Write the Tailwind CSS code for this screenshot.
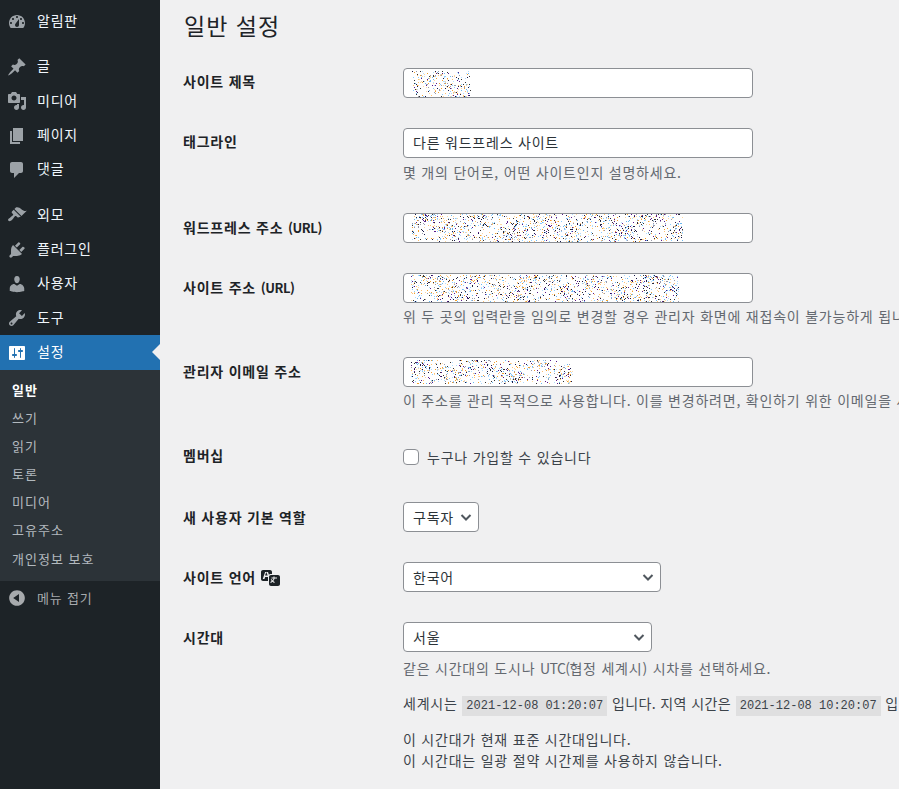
<!DOCTYPE html>
<html lang="ko">
<head>
<meta charset="utf-8">
<title>일반 설정</title>
<script src="https://cdn.jsdelivr.net/npm/@tailwindcss/browser@4"></script>
</head>
<body class="bg-[#f0f0f1] font-['Noto_Sans_CJK_KR','Noto_Sans',sans-serif] text-[14px] tracking-[0.78px] text-[#3c434a] overflow-hidden h-[789px] w-[899px]">
<div class="flex h-[789px] w-[899px] overflow-hidden">
  <aside class="w-40 shrink-0 bg-[#1d2327] pt-[4.4px] text-[14px] text-[#f0f6fc]">
    <a class="flex items-center h-[34.33px] mb-[11px] [&>span]:pb-[2px]"><svg class="w-5 h-5 ml-[7px] mr-[10px] fill-[#9ca2a7]" viewBox="0 0 20 20"><path fill-rule="evenodd" d="M3.76 16h12.48c1.1-1.37 1.76-3.11 1.76-5 0-4.42-3.58-8-8-8s-8 3.58-8 8c0 1.89.66 3.63 1.76 5zM10 4c.55 0 1 .45 1 1s-.45 1-1 1-1-.45-1-1 .45-1 1-1zM6 6c.55 0 1 .45 1 1s-.45 1-1 1-1-.45-1-1 .45-1 1-1zm8 0c.55 0 1 .45 1 1s-.45 1-1 1-1-.45-1-1 .45-1 1-1zm-5.37 5.55L12 7v6c0 1.1-.9 2-2 2s-2-.9-2-2c0-.57.24-1.08.63-1.45zM4 10c.55 0 1 .45 1 1s-.45 1-1 1-1-.45-1-1 .45-1 1-1zm12 0c.55 0 1 .45 1 1s-.45 1-1 1-1-.45-1-1 .45-1 1-1z"/></svg><span>알림판</span></a>
    <a class="flex items-center h-[34.33px] [&>span]:pb-[2px]"><svg class="w-5 h-5 ml-[7px] mr-[10px] fill-[#9ca2a7]" viewBox="0 0 20 20"><path d="M10.44 3.02l1.82-1.82 6.36 6.35-1.83 1.82c-1.05-.68-2.48-.57-3.41.36l-.75.75c-.92.93-1.04 2.35-.35 3.41l-1.83 1.82-2.41-2.41-2.8 2.79c-.42.42-3.38 2.71-3.8 2.29s1.86-3.39 2.28-3.81l2.79-2.79L4.1 9.36l1.83-1.82c1.05.69 2.48.57 3.4-.36l.75-.75c.93-.92 1.05-2.35.36-3.41z"/></svg><span>글</span></a>
    <a class="flex items-center h-[34.33px] [&>span]:pb-[2px]"><svg class="w-5 h-5 ml-[7px] mr-[10px] fill-[#9ca2a7]" viewBox="0 0 20 20"><path fill-rule="evenodd" d="M13 11V4c0-.55-.45-1-1-1h-1.67L9 1H5L3.67 3H2c-.55 0-1 .45-1 1v7c0 .55.45 1 1 1h10c.55 0 1-.45 1-1zM7 4.500c1.38 0 2.500 1.120 2.500 2.500S8.380 9.500 7 9.500 4.500 8.380 4.500 7 5.620 4.500 7 4.500zM14 6h5v10.500c0 1.380-1.120 2.500-2.500 2.500S14 17.880 14 16.500s1.120-2.500 2.500-2.500c.17 0 .34.02.5.05V9h-3V6zm-4 8.050V13h2v3.500c0 1.380-1.120 2.500-2.500 2.500S7 17.880 7 16.500 8.120 14 9.500 14c.17 0 .34.02.5.05z"/></svg><span>미디어</span></a>
    <a class="flex items-center h-[34.33px] [&>span]:pb-[2px]"><svg class="w-5 h-5 ml-[7px] mr-[10px] fill-[#9ca2a7]" viewBox="0 0 20 20"><path d="M6 15V2h10v13H6zm-1 1h8v2H3V5h2v11z"/></svg><span>페이지</span></a>
    <a class="flex items-center h-[34.33px] mb-[11px] [&>span]:pb-[2px]"><svg class="w-5 h-5 ml-[7px] mr-[10px] fill-[#9ca2a7]" viewBox="0 0 20 20"><path d="M5 2h9c1.100 0 2 .9 2 2v7c0 1.100-.9 2-2 2h-2l-5 5v-5H5c-1.100 0-2-.9-2-2V4c0-1.100.9-2 2-2z"/></svg><span>댓글</span></a>
    <a class="flex items-center h-[34.33px] [&>span]:pb-[2px]"><svg class="w-5 h-5 ml-[7px] mr-[10px] fill-[#9ca2a7]" viewBox="0 0 20 20"><path d="M14.480 11.060L7.410 3.990l1.500-1.500c.5-.56 2.300-.47 3.510.32 1.210.8 1.430 1.280 2.910 2.100 1.180.64 2.450 1.260 4.450.85zm-.71.71L6.700 4.700 4.930 6.470c-.39.39-.39 1.020 0 1.410l1.060 1.060c.39.39.39 1.030 0 1.420-.6.6-1.430 1.110-2.210 1.690-.35.26-.7.53-1.010.84C1.430 13.230.4 14.770 1.450 15.820c1.050 1.050 2.590.02 3.940-1.330.31-.31.58-.66.84-1.010.58-.78 1.090-1.610 1.690-2.210.39-.39 1.030-.39 1.420 0l1.060 1.060c.39.39 1.020.39 1.410 0z"/></svg><span>외모</span></a>
    <a class="flex items-center h-[34.33px] [&>span]:pb-[2px]"><svg class="w-5 h-5 ml-[7px] mr-[10px] fill-[#9ca2a7]" viewBox="0 0 20 20"><path d="M13.110 4.360L9.870 7.600 8 5.730l3.240-3.240c.35-.34 1.050-.2 1.560.32.52.51.66 1.210.31 1.550zm-8 1.770l.91-1.120 9.010 9.010-1.190.84c-.71.71-2.630 1.160-3.820 1.160H6.140L4.900 17.260c-.59.59-1.540.59-2.120 0-.59-.58-.59-1.530 0-2.120l1.240-1.240v-3.880c0-1.130.4-3.190 1.090-3.890zm7.260 3.970l3.240-3.240c.34-.35 1.040-.21 1.550.31.52.51.66 1.210.31 1.550l-3.240 3.250z"/></svg><span>플러그인</span></a>
    <a class="flex items-center h-[34.33px] [&>span]:pb-[2px]"><svg class="w-5 h-5 ml-[7px] mr-[10px] fill-[#9ca2a7]" viewBox="0 0 20 20"><path d="M10 9.250c-2.270 0-2.730-3.440-2.730-3.440C7 4.020 7.820 2 9.970 2c2.160 0 2.980 2.020 2.710 3.810 0 0-.41 3.440-2.680 3.440zm0 2.570L12.720 10c2.390 0 4.520 2.330 4.520 4.530v2.490s-3.650 1.130-7.240 1.130c-3.650 0-7.240-1.130-7.240-1.130v-2.490c0-2.250 1.940-4.480 4.470-4.480z"/></svg><span>사용자</span></a>
    <a class="flex items-center h-[34.33px] [&>span]:pb-[2px]"><svg class="w-5 h-5 ml-[7px] mr-[10px] fill-[#9ca2a7]" viewBox="0 0 20 20"><path fill-rule="evenodd" d="M16.680 9.770c-1.340 1.340-3.300 1.670-4.950.99l-5.410 6.520c-.99.99-2.590.99-3.580 0s-.99-2.590 0-3.570l6.520-5.420c-.68-1.650-.35-3.610.99-4.950 1.280-1.280 3.120-1.620 4.720-1.060l-2.890 2.890 2.820 2.820 2.860-2.870c.53 1.580.18 3.390-1.080 4.650zM3.810 16.210c.4.39 1.040.39 1.430 0 .4-.4.4-1.040 0-1.430-.39-.4-1.030-.4-1.430 0-.39.39-.39 1.030 0 1.430z"/></svg><span>도구</span></a>
    <a class="relative flex items-center h-[34.33px] bg-[#2271b1] text-white [&>span]:pb-[2px]"><svg class="w-5 h-5 ml-[7px] mr-[10px] fill-white" viewBox="0 0 20 20"><path fill-rule="evenodd" d="M18 16V4c0-.55-.45-1-1-1H3c-.55 0-1 .45-1 1v12c0 .55.45 1 1 1h14c.55 0 1-.45 1-1zM8 11h1c.55 0 1 .45 1 1s-.45 1-1 1H8v1.500c0 .28-.22.5-.5.5s-.5-.22-.5-.5V13H6c-.55 0-1-.45-1-1s.45-1 1-1h1V5.500c0-.28.22-.5.5-.5s.5.22.5.5V11zm5-2h-1c-.55 0-1-.45-1-1s.45-1 1-1h1V5.500c0-.28.22-.5.5-.5s.5.22.5.5V7h1c.55 0 1 .45 1 1s-.45 1-1 1h-1v5.500c0 .28-.22.5-.5.5s-.5-.22-.5-.5V9z"/></svg><span>설정</span><i class="absolute right-0 top-[9px] w-0 h-0 border-y-[8px] border-y-transparent border-r-[8px] border-r-[#f0f0f1]"></i></a>
    <ul class="bg-[#2c3338] pt-[6px] pb-[9px] text-[13px] tracking-[1px] text-[#f0f6fc]/70">
      <li class="flex items-center h-[28.1px] pl-3 font-bold text-white">일반</li>
      <li class="flex items-center h-[28.1px] pl-3">쓰기</li>
      <li class="flex items-center h-[28.1px] pl-3">읽기</li>
      <li class="flex items-center h-[28.1px] pl-3">토론</li>
      <li class="flex items-center h-[28.1px] pl-3">미디어</li>
      <li class="flex items-center h-[28.1px] pl-3">고유주소</li>
      <li class="flex items-center h-[28.1px] pl-3">개인정보 보호</li>
    </ul>
    <a class="flex items-center h-[34px] text-[13px] tracking-[0.8px] text-[#a7aaad] [&>span]:pb-[2px]"><svg class="w-5 h-5 ml-[7px] mr-[10px] fill-[#a7aaad]" viewBox="0 0 20 20"><path fill-rule="evenodd" d="M10 2.160c4.330 0 7.840 3.510 7.840 7.840s-3.510 7.840-7.840 7.840S2.160 14.330 2.160 10 5.710 2.160 10 2.160zm2 11.720V6.120L6.180 9.970z"/></svg><span>메뉴 접기</span></a>
  </aside>

  <main class="flex-1 min-w-0 pl-[23px]">
    <h1 class="h-[53px] pl-[1px] pt-[7px] text-[23px] tracking-[1px] leading-[36px] text-[#1d2327]">일반 설정</h1>

    <section class="flex py-[15px]">
      <label class="w-[220px] shrink-0 pt-[2px] font-bold text-[#1d2327] leading-[22px]">사이트 제목</label>
      <div class="relative w-[350px] h-[30px] rounded-[4px] border border-[#8c8f94] bg-white"><canvas data-noise width="59" height="26" class="absolute left-[8px] top-[2px]"></canvas></div>
    </section>

    <section class="flex py-[15px]">
      <label class="w-[220px] shrink-0 pt-[2px] font-bold text-[#1d2327] leading-[22px]">태그라인</label>
      <div>
        <input value="다른 워드프레스 사이트" class="block w-[350px] h-[30px] px-[9px] pb-[2px] rounded-[4px] border border-[#8c8f94] bg-white text-[#2c3338]">
        <p class="mt-[3px] leading-[22px] text-[#646970] whitespace-nowrap">몇 개의 단어로, 어떤 사이트인지 설명하세요.</p>
      </div>
    </section>

    <section class="flex py-[15px]">
      <label class="w-[220px] shrink-0 pt-[3px] font-bold text-[#1d2327] leading-[22px]">워드프레스 주소 <span class="text-[13px] font-semibold tracking-[-0.4px]">(URL)</span></label>
      <div class="relative w-[350px] h-[30px] rounded-[4px] border border-[#8c8f94] bg-white"><canvas data-noise width="271" height="28" class="absolute left-[8px] top-0"></canvas></div>
    </section>

    <section class="flex py-[15px]">
      <label class="w-[220px] shrink-0 pt-[3px] font-bold text-[#1d2327] leading-[22px]">사이트 주소 <span class="text-[13px] font-semibold tracking-[-0.4px]">(URL)</span></label>
      <div>
        <div class="relative w-[350px] h-[30px] rounded-[4px] border border-[#8c8f94] bg-white"><canvas data-noise width="268" height="27" class="absolute left-[7px] top-[1px]"></canvas></div>
        <p class="mt-[2px] leading-[22px] text-[#646970] whitespace-nowrap">위 두 곳의 입력란을 임의로 변경할 경우 관리자 화면에 재접속이 불가능하게 됩니다.</p>
      </div>
    </section>

    <section class="flex py-[15px]">
      <label class="w-[220px] shrink-0 pt-[3px] font-bold text-[#1d2327] leading-[22px]">관리자 이메일 주소</label>
      <div>
        <div class="relative w-[350px] h-[30px] rounded-[4px] border border-[#8c8f94] bg-white"><canvas data-noise width="162" height="24" class="absolute left-[7px] top-[2px]"></canvas></div>
        <p class="mt-[2px] leading-[22px] text-[#646970] whitespace-nowrap">이 주소를 관리 목적으로 사용합니다. 이를 변경하려면, 확인하기 위한 이메일을 새 주소로 보냅니다.</p>
      </div>
    </section>

    <section class="flex py-[15px] h-[61px]">
      <label class="w-[220px] shrink-0 pt-[3px] font-bold text-[#1d2327] leading-[22px]">멤버십</label>
      <div class="flex items-center h-[28px] mt-[2px] text-[#3c434a]">
        <span class="block w-4 h-4 rounded-[4px] border border-[#8c8f94] bg-white mr-[8px]"></span>
        <span>누구나 가입할 수 있습니다</span>
      </div>
    </section>

    <section class="flex py-[15px] h-[60px]">
      <label class="w-[220px] shrink-0 pt-[4px] font-bold text-[#1d2327] leading-[22px]">새 사용자 기본 역할</label>
      <div class="flex items-center justify-between w-[76px] h-[30px] pl-[9px] pr-[6px] rounded-[4px] border border-[#8c8f94] bg-white text-[#2c3338]">
        <span>구독자</span>
        <svg class="w-3 h-3 stroke-[#50575e] fill-none stroke-2" viewBox="0 0 12 12"><path d="M1.500 4l4.500 4.500L10.500 4"/></svg>
      </div>
    </section>

    <section class="flex py-[15px] h-[60px]">
      <label class="flex items-start gap-[5px] w-[220px] shrink-0 pt-[4px] font-bold text-[#1d2327] leading-[22px]">사이트 언어
        <svg class="w-5 h-5 mt-[1px] fill-[#1d2327]" viewBox="0 0 20 20"><path fill-rule="evenodd" d="M11 7H9.490c-.63 0-1.250.3-1.590.7L7 5H4.130l-2.390 7h1.690l.74-2H7v4H2c-1.100 0-2-.9-2-2V5c0-1.100.9-2 2-2h7c1.100 0 2 .9 2 2v2zM6.700 8.550L5.300 4.880 4.010 8.550h2.690zM10 8h7c1.100 0 2 .9 2 2v7c0 1.100-.9 2-2 2h-7c-1.100 0-2-.9-2-2v-7c0-1.100.9-2 2-2zm.5 2.500v1h2.100c-.2.7-.6 1.350-1.100 1.900-.3-.35-.55-.7-.75-1.100h-1c.25.6.6 1.200 1.050 1.750-.45.4-1 .7-1.500.95l.4.9c.65-.3 1.250-.7 1.800-1.200.55.5 1.150.9 1.800 1.200l.4-.9c-.5-.25-1.050-.55-1.500-.95.7-.8 1.200-1.700 1.450-2.550H16v-1h-2.500V9.500h-1v1z"/></svg>
      </label>
      <div class="flex items-center justify-between w-[258px] h-[30px] pl-[9px] pr-[6px] rounded-[4px] border border-[#8c8f94] bg-white text-[#2c3338]">
        <span>한국어</span>
        <svg class="w-3 h-3 stroke-[#50575e] fill-none stroke-2" viewBox="0 0 12 12"><path d="M1.500 4l4.500 4.500L10.500 4"/></svg>
      </div>
    </section>

    <section class="flex pt-[15px]">
      <label class="w-[220px] shrink-0 pt-[4px] font-bold text-[#1d2327] leading-[22px]">시간대</label>
      <div>
        <div class="flex items-center justify-between w-[249px] h-[30px] pl-[9px] pr-[6px] rounded-[4px] border border-[#8c8f94] bg-white text-[#2c3338]">
          <span>서울</span>
          <svg class="w-3 h-3 stroke-[#50575e] fill-none stroke-2" viewBox="0 0 12 12"><path d="M1.500 4l4.500 4.500L10.500 4"/></svg>
        </div>
        <p class="mt-[5px] leading-[22px] text-[#646970] whitespace-nowrap">같은 시간대의 도시나 <span class="tracking-[-0.6px]">UTC(</span>협정 세계시) 시차를 선택하세요.</p>
        <p class="mt-[13px] leading-[22px] text-[#3c434a] whitespace-nowrap">세계시는 <code class="inline-block h-5 leading-5 px-[4px] bg-black/[0.07] font-['Liberation_Mono',monospace] text-[12px] tracking-normal">2021-12-08 01:20:07</code> <span class="tracking-[0.4px]">입니다. 지역 시간은</span> <code class="inline-block h-5 leading-5 px-[4px] bg-black/[0.07] font-['Liberation_Mono',monospace] text-[12px] tracking-normal">2021-12-08 10:20:07</code> 입니다.</p>
        <p class="mt-[13px] leading-[21px] text-[#3c434a] whitespace-nowrap">이 시간대가 현재 표준 시간대입니다.</p>
        <p class="leading-[21px] text-[#3c434a] whitespace-nowrap">이 시간대는 일광 절약 시간제를 사용하지 않습니다.</p>
      </div>
    </section>
  </main>
</div>
<script>
(function () {
  var seed = 12345;
  function r() { seed = (seed * 1664525 + 1013904223) % 4294967296; return seed / 4294967296; }
  var colors = ['#1a1a4a', '#f0a030', '#6ab8f0', '#5a1a8a', '#9a9aaa', '#ffd9a0', '#b0dcff', '#333333', '#ffc070', '#8accff'];
  document.querySelectorAll('canvas[data-noise]').forEach(function (c) {
    var g = c.getContext('2d');
    for (var y = 0; y < c.height; y++) for (var x = 0; x < c.width; x++) {
      var d = 0.17 + 0.08 * Math.sin(x / 9) * Math.cos(y / 6);
      if (r() < d) { g.fillStyle = colors[Math.floor(r() * colors.length)]; g.fillRect(x, y, 1, 1); }
    }
  });
})();
</script>
</body>
</html>
